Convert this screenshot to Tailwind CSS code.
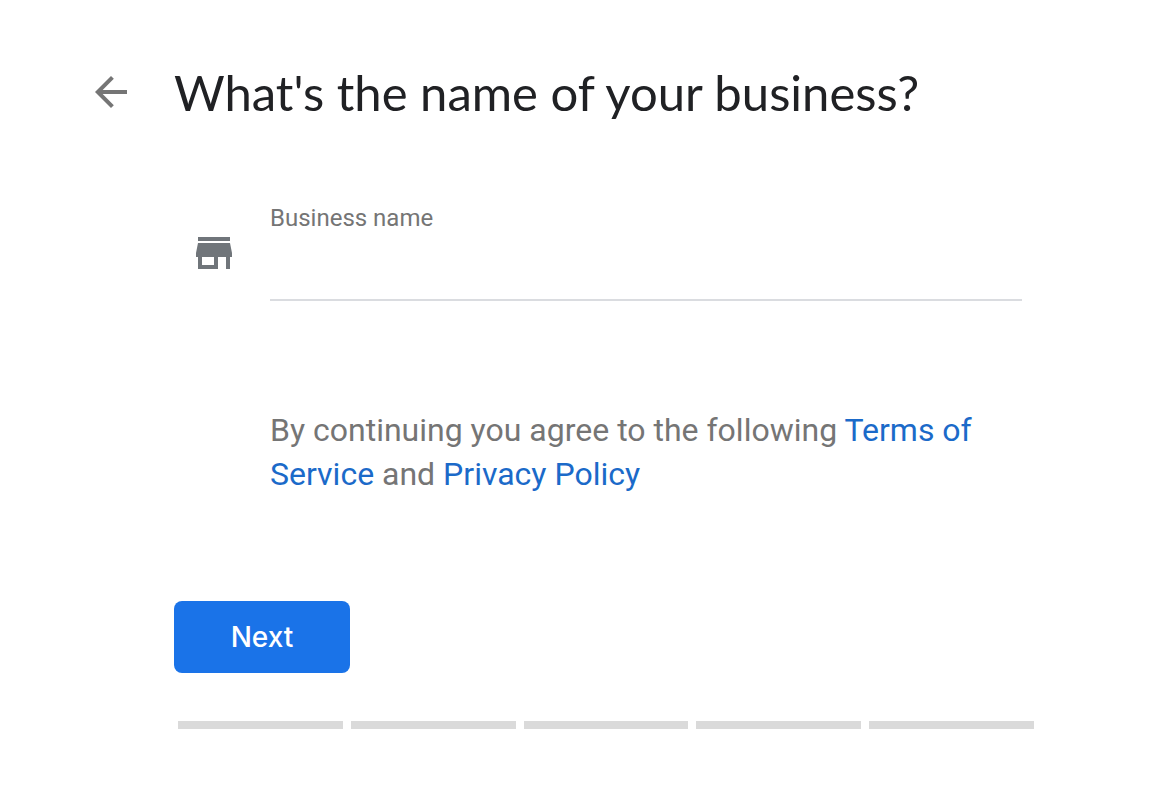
<!DOCTYPE html>
<html lang="en">
<head>
    <meta charset="UTF-8">
    <meta name="viewport" content="width=device-width, initial-scale=1.0">
    <title>Business name</title>
    <script src="https://cdn.jsdelivr.net/npm/@tailwindcss/browser@4"></script>
</head>
<body class="min-h-screen bg-white font-[Roboto,sans-serif] text-[#202124]">
    <main class="pt-16 pr-[118px] pb-20 pl-[87px]">
        <header class="flex items-center">
            <button type="button" aria-label="Back" class="mr-[39px] size-12 shrink-0 text-[#757575]">
                <svg viewBox="0 0 24 24" class="size-12" fill="currentColor"><path d="M20 11H7.83l5.59-5.59L12 4l-8 8 8 8 1.41-1.41L7.83 13H20v-2z"/></svg>
            </button>
            <h1 class="font-[Lato,sans-serif] text-[49px] leading-[56px]">What's the name of your business?</h1>
        </header>

        <form class="pt-20 pl-[87px]">
            <div class="flex pl-4">
                <svg viewBox="0 0 24 24" class="mt-[29px] mr-8 size-12 shrink-0 text-[#70757a]" fill="currentColor"><path d="M20 4H4v2h16V4zm1 10v-2l-1-5H4l-1 5v2h1v6h10v-6h4v6h2v-6h1zm-9 4H6v-4h6v4z"/></svg>
                <div class="mr-3 flex-1">
                    <label for="business" class="block text-[24px] leading-9 text-[#757575]">Business name</label>
                    <input id="business" name="business" type="text" class="block h-[65px] w-full border-b-2 border-[#dadce0] text-[32px] outline-none">
                </div>
            </div>

            <p class="mt-[107px] ml-24 text-[32px] leading-[44px] text-[#757575]">By continuing you agree to the following <a href="#" class="text-[#1b6ac9]">Terms of Service</a> and <a href="#" class="text-[#1b6ac9]">Privacy Policy</a></p>

            <button type="submit" class="mt-[105px] block h-18 w-44 rounded-lg bg-[#1a73e8] font-[Inter,sans-serif] text-[28px] font-medium text-white">Next</button>

            <div class="mt-12 ml-1 flex gap-2">
                <div class="h-2 flex-1 bg-[#dadada]"></div>
                <div class="h-2 flex-1 bg-[#dadada]"></div>
                <div class="h-2 flex-1 bg-[#dadada]"></div>
                <div class="h-2 flex-1 bg-[#dadada]"></div>
                <div class="h-2 flex-1 bg-[#dadada]"></div>
            </div>
        </form>
    </main>
</body>
</html>
